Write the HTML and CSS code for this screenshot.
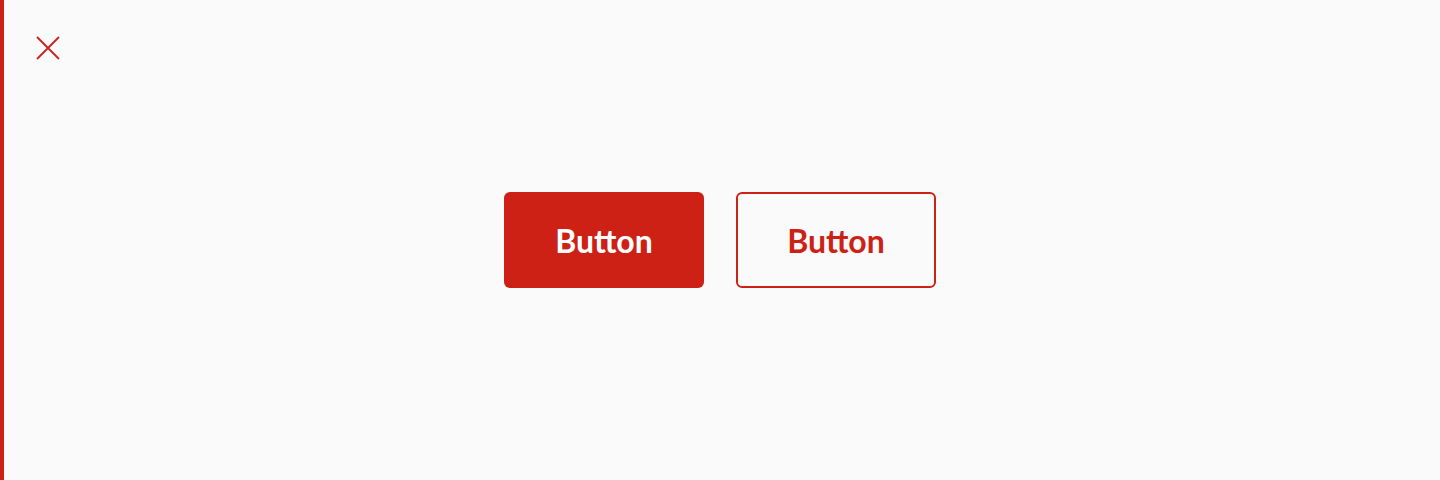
FILE: index.html
```html
<!DOCTYPE html>
<html lang="en">
<head>
  <meta charset="UTF-8">
  <meta name="viewport" content="width=device-width, initial-scale=1.0">
  <title>Buttons</title>
  <link rel="stylesheet" href="styles.css">
</head>
<body>

  <div class="panel">
    <!-- Close icon -->
    <button class="close" aria-label="Close">
      <svg width="24" height="24" viewBox="0 0 24 24">
        <path d="M1 1 L23 23 M23 1 L1 23" stroke="#c8231a" stroke-width="1.8" fill="none"/>
      </svg>
    </button>

    <!-- Button row -->
    <div class="actions">
      <button class="btn btn-primary">Button</button>
      <button class="btn btn-secondary">Button</button>
    </div>
  </div>

</body>
</html>
```

FILE: styles.css
```css
/* Reset */
body, html {
  margin: 0;
  padding: 0;
  height: 100%;
  overflow: hidden;
  background: #fafafa;
  font-family: Lato, sans-serif;
}

.panel {
  position: relative;
  box-sizing: border-box;
  height: 100%;
  border-left: 4px solid #cc2114;
  display: flex;
  align-items: center;
  justify-content: center;
}

/* Close icon sits over the panel corner */
.close {
  position: absolute;
  top: 36px;
  left: 32px;
  padding: 0;
  border: 0;
  background: none;
  width: 24px;
  height: 24px;
  cursor: pointer;
}

.close svg {
  display: block;
}

.actions {
  display: flex;
  gap: 32px;
  margin-left: -4px;
}

.btn {
  box-sizing: border-box;
  width: 200px;
  height: 96px;
  border-radius: 6px;
  font-family: Lato, sans-serif;
  font-size: 32px;
  font-weight: 700;
  padding: 0;
  cursor: pointer;
}

.btn-primary {
  background: #cc2114;
  border: 0;
  color: #ffffff;
}

.btn-secondary {
  background: transparent;
  border: 2px solid #cc2114;
  color: #cc2114;
}
```
